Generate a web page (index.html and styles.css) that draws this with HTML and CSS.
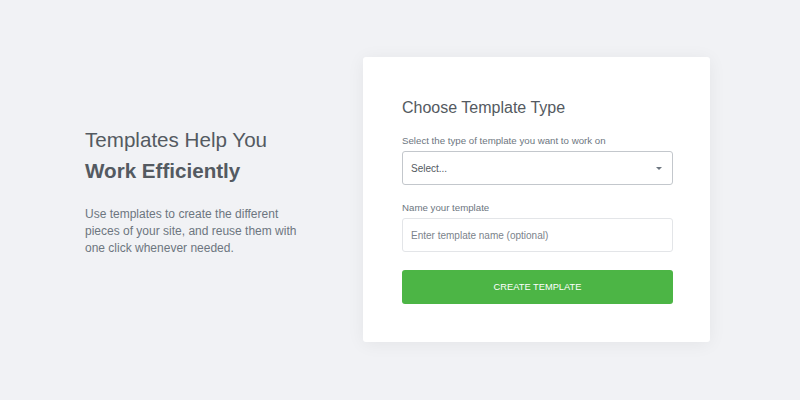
FILE: index.html
```html
<!DOCTYPE html>
<html lang="en">
<head>
<meta charset="utf-8">
<title>Choose Template Type</title>
<link rel="stylesheet" href="styles.css">
</head>
<body>
<main class="page">
  <section class="intro">
    <h2 class="intro-title">Templates Help You<br><strong>Work Efficiently</strong></h2>
    <p class="intro-text">Use templates to create the different pieces of your site, and reuse them with one click whenever needed.</p>
  </section>
  <form class="card">
    <h3 class="card-title">Choose Template Type</h3>
    <label class="field-label">Select the type of template you want to work on</label>
    <div class="select">
      <span class="select-value">Select...</span>
      <span class="caret"></span>
    </div>
    <label class="field-label field-label-second">Name your template</label>
    <div class="input"><span class="placeholder">Enter template name (optional)</span></div>
    <button type="button" class="btn">CREATE TEMPLATE</button>
  </form>
</main>
</body>
</html>
```
FILE: styles.css
```css
* { box-sizing: border-box; }
html, body { margin: 0; padding: 0; }
body {
  background: #f1f2f5;
  font-family: "Liberation Sans", Arial, sans-serif;
  width: 800px;
  height: 400px;
  overflow: hidden;
}
.page {
  display: flex;
  align-items: flex-start;
  padding: 57px 0 0 85px;
}
.intro {
  width: 278px;
  padding-top: 67px;
}
.intro-title {
  margin: 0;
  font-size: 20.6px;
  font-weight: normal;
  line-height: 31px;
  color: #545a61;
}
.intro-title strong { font-weight: bold; }
.intro-text {
  margin: 20px 0 0;
  font-size: 12px;
  line-height: 17px;
  color: #6d7680;
  width: 215px;
}
.card {
  width: 347px;
  background: #ffffff;
  border-radius: 3px;
  box-shadow: 0 2px 18px rgba(0, 0, 0, 0.06);
  padding: 41px 37px 38px 39px;
  display: flex;
  flex-direction: column;
}
.card-title {
  margin: 0;
  font-size: 16px;
  line-height: 20px;
  font-weight: normal;
  color: #545a61;
}
.field-label {
  margin-top: 16px;
  font-size: 9.7px;
  line-height: 14px;
  color: #6d7680;
}
.field-label-second { margin-top: 16px; }
.select, .input {
  margin-top: 3px;
  height: 34px;
  border-radius: 3px;
  display: flex;
  align-items: center;
  padding: 0 8px;
  font-size: 10px;
}
.select {
  border: 1px solid #c3c7cc;
  justify-content: space-between;
  color: #545a61;
}
.caret {
  width: 0;
  height: 0;
  border-left: 3px solid transparent;
  border-right: 3px solid transparent;
  border-top: 3px solid #6d7680;
  margin-right: 2px;
}
.input {
  border: 1px solid #e3e5e8;
  color: #7b838b;
}
.btn {
  margin-top: 18px;
  height: 34px;
  border: 0;
  border-radius: 3px;
  background: #4cb545;
  color: #ffffff;
  font-family: "Liberation Sans", Arial, sans-serif;
  font-size: 9.3px;
  font-weight: normal;
  cursor: pointer;
}
```
